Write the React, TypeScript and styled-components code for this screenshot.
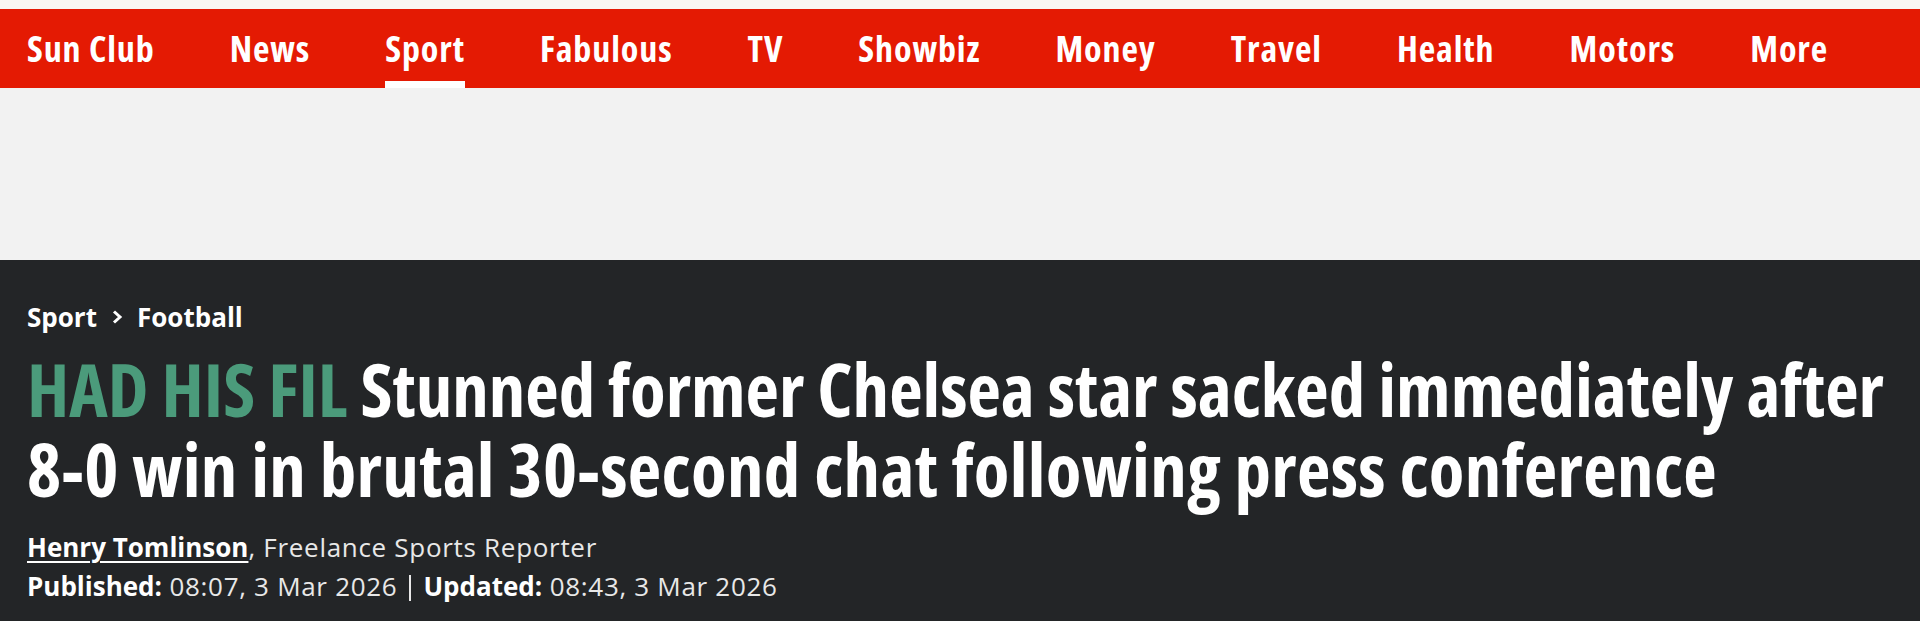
import React from "react";
import styled, { createGlobalStyle } from "styled-components";

const GlobalStyle = createGlobalStyle`
  html, body {
    margin: 0;
    padding: 0;
    background: #faf7f2;
  }
  body {
    font-family: "Open Sans", "Liberation Sans", sans-serif;
  }
`;

let Page = styled.div`
  width: 1920px;
  height: 621px;
  overflow: hidden;
  display: flex;
  flex-direction: column;
`;

let TopStrip = styled.div`
  flex-shrink: 0;
  height: 9px;
  background: #faf7f2;
`;

let NavBar = styled.nav`
  flex-shrink: 0;
  height: 79px;
  background: #e41a03;
  display: flex;
  align-items: stretch;
  gap: 75px;
  padding: 0 27px;
`;

let NavItem = styled.a<{ $active?: boolean }>`
  display: flex;
  align-items: center;
  white-space: nowrap;
  font-family: "Open Sans", sans-serif;
  font-stretch: 75%;
  font-weight: 700;
  font-size: 36px;
  letter-spacing: 0.9px;
  color: #fff;
  text-decoration: none;
  box-shadow: ${(p) => (p.$active ? "inset 0 -7px 0 #fff" : "none")};
`;

let AdSlot = styled.div`
  flex-shrink: 0;
  height: 172px;
  background: #f2f2f2;
`;

let ArticleHeader = styled.header`
  flex: 1 0 auto;
  background: #232527;
  padding: 41px 27px 0;
  color: #fff;
`;

let Breadcrumb = styled.div`
  display: flex;
  align-items: center;
  gap: 14px;
  font-size: 26px;
  line-height: 32px;
  font-weight: 700;
`;

let Headline = styled.h1`
  margin: 16px 0 20px;
  font-family: "Open Sans", sans-serif;
  font-stretch: 75%;
  font-weight: 700;
  font-size: 73px;
  line-height: 80px;
  white-space: nowrap;
`;

let HeadlineLine = styled.span<{ $spacing?: number }>`
  display: block;
  letter-spacing: ${(p) => p.$spacing ?? 0}px;
`;

let Kicker = styled.span`
  color: #4b9b7b;
`;

let Meta = styled.div`
  display: flex;
  flex-direction: column;
  gap: 3px;
`;

let MetaLine = styled.div`
  font-size: 26px;
  line-height: 36px;
  color: #e8e8e8;
  letter-spacing: 0.7px;
`;

let Author = styled.a`
  color: #fff;
  font-weight: 700;
  letter-spacing: 0;
  text-decoration: underline;
  text-decoration-thickness: 2px;
  text-underline-offset: 4px;
`;

let Label = styled.b`
  color: #fff;
  font-weight: 700;
  letter-spacing: 0;
`;

let Divider = styled.span`
  display: inline-block;
  width: 2px;
  height: 26px;
  background: #e8e8e8;
  margin: 0 12px;
  vertical-align: -5px;
`;

const navLinks = [
  "Sun Club",
  "News",
  "Sport",
  "Fabulous",
  "TV",
  "Showbiz",
  "Money",
  "Travel",
  "Health",
  "Motors",
  "More",
];

const Chevron = () => (
  <svg width="12" height="16" viewBox="0 0 12 16" fill="none">
    <path d="M3 2.5l6 5.5-6 5.5" stroke="#fff" strokeWidth="3" />
  </svg>
);

export default function App() {
  return (
    <Page>
      <GlobalStyle />
      <TopStrip />
      <NavBar>
        {navLinks.map((l) => (
          <NavItem key={l} $active={l === "Sport"}>
            {l}
          </NavItem>
        ))}
      </NavBar>
      <AdSlot />
      <ArticleHeader>
        <Breadcrumb>
          <span>Sport</span>
          <Chevron />
          <span>Football</span>
        </Breadcrumb>
        <Headline>
          <HeadlineLine>
            <Kicker>HAD HIS FIL</Kicker> Stunned former Chelsea star sacked
            immediately after
          </HeadlineLine>
          <HeadlineLine $spacing={0.35}>
            8-0 win in brutal 30-second chat following press conference
          </HeadlineLine>
        </Headline>
        <Meta>
          <MetaLine>
            <Author>Henry Tomlinson</Author>, Freelance Sports Reporter
          </MetaLine>
          <MetaLine>
            <Label>Published:</Label> 08:07, 3 Mar 2026
            <Divider />
            <Label>Updated:</Label> 08:43, 3 Mar 2026
          </MetaLine>
        </Meta>
      </ArticleHeader>
    </Page>
  );
}
